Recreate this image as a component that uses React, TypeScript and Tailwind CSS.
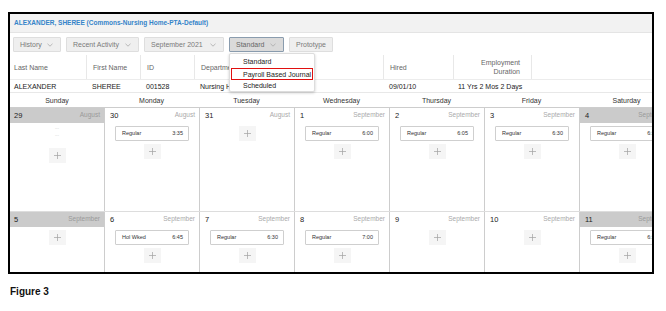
import React from "react";

type Day = {
  n: string;
  m: string;
  weekend?: boolean;
  shift?: [string, string];
  marks?: boolean;
};

const week1: Day[] = [
  { n: "29", m: "August", weekend: true, marks: true },
  { n: "30", m: "August", shift: ["Regular", "3:35"] },
  { n: "31", m: "August" },
  { n: "1", m: "September", shift: ["Regular", "6:00"] },
  { n: "2", m: "September", shift: ["Regular", "6:05"] },
  { n: "3", m: "September", shift: ["Regular", "6:30"] },
  { n: "4", m: "September", weekend: true, shift: ["Regular", "6:30"] },
];

const week2: Day[] = [
  { n: "5", m: "September", weekend: true },
  { n: "6", m: "September", shift: ["Hol Wked", "6:45"] },
  { n: "7", m: "September", shift: ["Regular", "6:30"] },
  { n: "8", m: "September", shift: ["Regular", "7:00"] },
  { n: "9", m: "September" },
  { n: "10", m: "September" },
  { n: "11", m: "September", weekend: true, shift: ["Regular", "6:30"] },
];

const days = ["Sunday", "Monday", "Tuesday", "Wednesday", "Thursday", "Friday", "Saturday"];

function Chevron() {
  return (
    <svg width="6" height="4" viewBox="0 0 6 4" className="shrink-0">
      <path d="M0.5 0.8 L3 3.2 L5.5 0.8" fill="none" stroke="#a8a8a8" strokeWidth="0.8" />
    </svg>
  );
}

function Plus() {
  return (
    <div className="mx-auto flex h-[15px] w-[17px] items-center justify-center bg-[#f5f5f5]">
      <svg width="7" height="7" viewBox="0 0 7 7">
        <path d="M3.5 0 V7 M0 3.5 H7" stroke="#a0a0a0" strokeWidth="0.7" />
      </svg>
    </div>
  );
}

function Cell({ d, first }: { d: Day; first: boolean }) {
  return (
    <div className={`flex min-w-0 flex-col ${first ? "" : "border-l border-[#cdcdcd]"}`}>
      <div
        className={`flex h-[15px] items-center justify-between pr-[4px] ${
          first ? "pl-[4px]" : "pl-[5px]"
        } ${d.weekend ? "bg-[#cbcbcb]" : ""}`}
      >
        <span className="text-[7.5px] leading-none text-[#222]">{d.n}</span>
        <span className={`whitespace-nowrap text-[6.5px] leading-none ${d.weekend ? "text-[#9a9a9a]" : "text-[#aaaaaa]"}`}>{d.m}</span>
      </div>
      {d.marks && (
        <div className="flex h-[22px] flex-col items-center pt-[1px]">
          <span className="h-[7px] text-[4px] leading-[7px] text-[#bbbbbb]">---</span>
          <span className="h-[7px] text-[4px] leading-[7px] text-[#bbbbbb]">---</span>
        </div>
      )}
      {d.shift && (
        <div className="ml-[10px] mt-[3px] flex h-[15px] w-[74px] shrink-0 items-center justify-between rounded-[1px] border border-[#cfcfcf] bg-white pl-[6px] pr-[5px]">
          <span className="whitespace-nowrap text-[5.5px] leading-none text-[#333]">{d.shift[0]}</span>
          <span className="text-[5.5px] leading-none text-[#333]">{d.shift[1]}</span>
        </div>
      )}
      <div className="mt-[3px]">
        <Plus />
      </div>
    </div>
  );
}

function Btn({ label, w, chevron = true, active = false }: { label: string; w: string; chevron?: boolean; active?: boolean }) {
  return (
    <div
      className={`flex h-[15px] items-center justify-between rounded-[1px] border pl-[6px] pr-[7px] ${w} ${
        active ? "border-[#8a9cae] bg-[#dadada] text-[#666]" : "border-[#dedede] bg-[#efefef] text-[#7a7a7a]"
      }`}
    >
      <span className="whitespace-nowrap text-[7px] leading-none">{label}</span>
      {chevron && <Chevron />}
    </div>
  );
}

export default function App() {
  return (
    <div
      className="h-[311px] w-[666px] bg-white pl-[8px] pt-[12px]"
      style={{ fontFamily: '"Liberation Sans", Arial, sans-serif' }}
    >
      <div className="relative h-[262px] w-[646px] overflow-hidden border-2 border-black bg-white">
        {/* title band */}
        <div className="flex h-[19px] items-center border-b border-[#e4e4e4] bg-[#f2f2f2] pl-[4px]">
          <span className="text-[6.5px] font-bold leading-none text-[#3584c9]">
            ALEXANDER, SHEREE (Commons-Nursing Home-PTA-Default)
          </span>
        </div>
        {/* toolbar */}
        <div className="flex gap-[5px] pb-[3px] pl-[3px] pt-[4px]">
          <Btn label="History" w="w-[48px]" />
          <Btn label="Recent Activity" w="w-[73px]" />
          <Btn label="September 2021" w="w-[80px]" />
          <div className="relative">
            <Btn label="Standard" w="w-[55px]" active />
            <div className="absolute left-0 top-[16px] z-10 flex h-[39px] w-[86px] flex-col rounded-[2px] border border-[#dddddd] bg-white pt-[2px] shadow-[0_1px_3px_rgba(0,0,0,0.2)]">
              <div className="flex h-[11px] items-center whitespace-nowrap pl-[13px] text-[7px] leading-none text-[#222]">Standard</div>
              <div className="mx-[1px] mt-[1px] flex h-[12px] items-center whitespace-nowrap border border-[#e01010] pl-[11px] text-[7px] leading-none text-[#222]">
                Payroll Based Journal
              </div>
              <div className="flex h-[11px] items-center whitespace-nowrap pl-[13px] text-[7px] leading-none text-[#222]">Scheduled</div>
            </div>
          </div>
          <Btn label="Prototype" w="w-[44px]" chevron={false} />
        </div>
        {/* table header */}
        <div className="flex h-[25px] border-b border-[#ececec] text-[7px] leading-none text-[#666]">
          <div className="flex w-[76px] items-center pl-[4px]">Last Name</div>
          <div className="flex w-[54px] items-center border-l border-[#e8e8e8] pl-[6px]">First Name</div>
          <div className="flex w-[54px] items-center border-l border-[#e8e8e8] pl-[6px]">ID</div>
          <div className="flex w-[189px] items-center border-l border-[#e8e8e8] pl-[6px]">Department</div>
          <div className="flex w-[70px] items-center border-l border-[#e8e8e8] pl-[6px]">Hired</div>
          <div className="flex w-[78px] flex-col items-end justify-center gap-[2px] border-l border-[#e8e8e8] pr-[11px] text-right">
            <span>Employment</span>
            <span>Duration</span>
          </div>
          <div className="border-l border-[#e8e8e8]" />
        </div>
        {/* data row */}
        <div className="flex h-[13px] items-center border-b border-[#e8e8e8] text-[7px] leading-none text-[#1a1a1a]">
          <div className="w-[76px] pl-[4px]">ALEXANDER</div>
          <div className="w-[54px] pl-[6px]">SHEREE</div>
          <div className="w-[54px] pl-[6px]">001528</div>
          <div className="w-[189px] pl-[6px]">Nursing Home</div>
          <div className="w-[70px] pl-[6px]">09/01/10</div>
          <div className="w-[120px] whitespace-nowrap pl-[5px]">11 Yrs 2 Mos 2 Days</div>
        </div>
        {/* day names */}
        <div className="grid h-[15px] grid-cols-[94px_repeat(6,95px)] items-center border-b border-[#cdcdcd] text-[7px] leading-none text-[#333]">
          {days.map((d) => (
            <div key={d} className="text-center">
              {d}
            </div>
          ))}
        </div>
        {/* week 1 */}
        <div className="grid h-[104px] grid-cols-[94px_repeat(6,95px)] border-b border-[#dddddd]">
          {week1.map((d, i) => (
            <Cell key={d.n} d={d} first={i === 0} />
          ))}
        </div>
        {/* week 2 */}
        <div className="grid h-[70px] grid-cols-[94px_repeat(6,95px)]">
          {week2.map((d, i) => (
            <Cell key={d.n} d={d} first={i === 0} />
          ))}
        </div>
      </div>
      <div className="pl-[2px] pt-[13px] text-[10px] font-bold leading-none text-[#111]">
        Figure 3
      </div>
    </div>
  );
}
